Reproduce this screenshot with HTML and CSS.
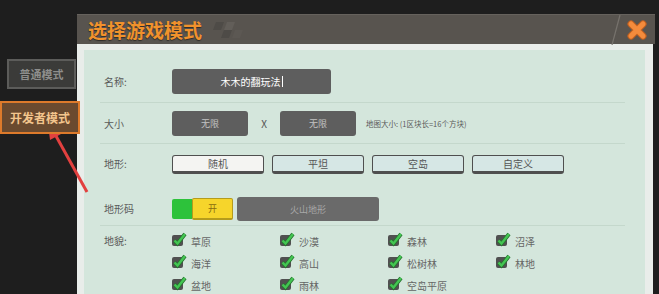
FILE: index.html
```html
<!DOCTYPE html>
<html>

<head>
    <meta charset="UTF-8">
    <title>选择游戏模式</title>
    <link rel="stylesheet" href="styles.css">
</head>

<body>
<div class="screen">
    <div class="modes">
        <div class="mode">普通模式</div>
        <div class="mode mode-dev">开发者模式</div>
    </div>

    <div class="dialog">
        <div class="dialog-head">
            <span class="dialog-title">选择游戏模式</span>
            <svg class="head-deco" width="34" height="24" viewBox="0 0 34 24">
                <polygon points="6,4 14,4 11,12 3,12" fill="#4e4b47"/>
                <polygon points="17,4 25,4 22,12 14,12" fill="#625e59"/>
                <polygon points="14,12 22,12 19,20 11,20" fill="#4e4b47"/>
                <polygon points="25,12 33,12 30,20 22,20" fill="#5c5853"/>
            </svg>
            <svg class="head-slash" width="12" height="30" viewBox="0 0 12 30">
                <line x1="2" y1="30" x2="10" y2="0" stroke="#77736d" stroke-width="1.2"/>
            </svg>
            <svg class="close" width="22" height="22" viewBox="0 0 22 22">
                <path d="M5 5 L17 17 M17 5 L5 17" stroke="#c4611f" stroke-width="7" stroke-linecap="round"/>
                <path d="M5 5 L17 17 M17 5 L5 17" stroke="#f38b3c" stroke-width="5" stroke-linecap="round"/>
            </svg>
        </div>

        <div class="dialog-body">
            <div class="sheet">
                <div class="row row-name">
                    <span class="label">名称:</span>
                    <div class="field field-name">木木的翻玩法<span class="caret"></span></div>
                </div>

                <div class="row row-size">
                    <span class="label">大小</span>
                    <div class="field field-size">无限</div>
                    <span class="times">X</span>
                    <div class="field field-size">无限</div>
                    <span class="hint">地图大小: (1区块长=16个方块)</span>
                </div>

                <div class="row-group">
                    <div class="row row-terrain">
                        <span class="label">地形:</span>
                        <div class="terrains">
                            <div class="terrain terrain-on">随机</div>
                            <div class="terrain">平坦</div>
                            <div class="terrain">空岛</div>
                            <div class="terrain">自定义</div>
                        </div>
                    </div>
                    <div class="row row-code">
                        <span class="label">地形码</span>
                        <div class="toggle">
                            <span class="toggle-on"></span>
                            <span class="toggle-knob">开</span>
                        </div>
                        <div class="field field-code">火山地形</div>
                    </div>
                </div>

                <div class="row row-biome">
                    <span class="label">地貌:</span>
                    <div class="biomes">
                        <div class="biome"><svg class="tick" width="16" height="15" viewBox="0 0 16 15"><rect x="0" y="3" width="11" height="11" rx="2" fill="#505050"/><path d="M2.5 8.5 L5.5 11.5 L13 2" fill="none" stroke="#27722f" stroke-width="4"/><path d="M2.5 8.5 L5.5 11.5 L13 2" fill="none" stroke="#43c552" stroke-width="2.4"/></svg>草原</div>
                        <div class="biome"><svg class="tick" width="16" height="15" viewBox="0 0 16 15"><rect x="0" y="3" width="11" height="11" rx="2" fill="#505050"/><path d="M2.5 8.5 L5.5 11.5 L13 2" fill="none" stroke="#27722f" stroke-width="4"/><path d="M2.5 8.5 L5.5 11.5 L13 2" fill="none" stroke="#43c552" stroke-width="2.4"/></svg>沙漠</div>
                        <div class="biome"><svg class="tick" width="16" height="15" viewBox="0 0 16 15"><rect x="0" y="3" width="11" height="11" rx="2" fill="#505050"/><path d="M2.5 8.5 L5.5 11.5 L13 2" fill="none" stroke="#27722f" stroke-width="4"/><path d="M2.5 8.5 L5.5 11.5 L13 2" fill="none" stroke="#43c552" stroke-width="2.4"/></svg>森林</div>
                        <div class="biome"><svg class="tick" width="16" height="15" viewBox="0 0 16 15"><rect x="0" y="3" width="11" height="11" rx="2" fill="#505050"/><path d="M2.5 8.5 L5.5 11.5 L13 2" fill="none" stroke="#27722f" stroke-width="4"/><path d="M2.5 8.5 L5.5 11.5 L13 2" fill="none" stroke="#43c552" stroke-width="2.4"/></svg>沼泽</div>
                        <div class="biome"><svg class="tick" width="16" height="15" viewBox="0 0 16 15"><rect x="0" y="3" width="11" height="11" rx="2" fill="#505050"/><path d="M2.5 8.5 L5.5 11.5 L13 2" fill="none" stroke="#27722f" stroke-width="4"/><path d="M2.5 8.5 L5.5 11.5 L13 2" fill="none" stroke="#43c552" stroke-width="2.4"/></svg>海洋</div>
                        <div class="biome"><svg class="tick" width="16" height="15" viewBox="0 0 16 15"><rect x="0" y="3" width="11" height="11" rx="2" fill="#505050"/><path d="M2.5 8.5 L5.5 11.5 L13 2" fill="none" stroke="#27722f" stroke-width="4"/><path d="M2.5 8.5 L5.5 11.5 L13 2" fill="none" stroke="#43c552" stroke-width="2.4"/></svg>高山</div>
                        <div class="biome"><svg class="tick" width="16" height="15" viewBox="0 0 16 15"><rect x="0" y="3" width="11" height="11" rx="2" fill="#505050"/><path d="M2.5 8.5 L5.5 11.5 L13 2" fill="none" stroke="#27722f" stroke-width="4"/><path d="M2.5 8.5 L5.5 11.5 L13 2" fill="none" stroke="#43c552" stroke-width="2.4"/></svg>松树林</div>
                        <div class="biome"><svg class="tick" width="16" height="15" viewBox="0 0 16 15"><rect x="0" y="3" width="11" height="11" rx="2" fill="#505050"/><path d="M2.5 8.5 L5.5 11.5 L13 2" fill="none" stroke="#27722f" stroke-width="4"/><path d="M2.5 8.5 L5.5 11.5 L13 2" fill="none" stroke="#43c552" stroke-width="2.4"/></svg>林地</div>
                        <div class="biome"><svg class="tick" width="16" height="15" viewBox="0 0 16 15"><rect x="0" y="3" width="11" height="11" rx="2" fill="#505050"/><path d="M2.5 8.5 L5.5 11.5 L13 2" fill="none" stroke="#27722f" stroke-width="4"/><path d="M2.5 8.5 L5.5 11.5 L13 2" fill="none" stroke="#43c552" stroke-width="2.4"/></svg>盆地</div>
                        <div class="biome"><svg class="tick" width="16" height="15" viewBox="0 0 16 15"><rect x="0" y="3" width="11" height="11" rx="2" fill="#505050"/><path d="M2.5 8.5 L5.5 11.5 L13 2" fill="none" stroke="#27722f" stroke-width="4"/><path d="M2.5 8.5 L5.5 11.5 L13 2" fill="none" stroke="#43c552" stroke-width="2.4"/></svg>雨林</div>
                        <div class="biome"><svg class="tick" width="16" height="15" viewBox="0 0 16 15"><rect x="0" y="3" width="11" height="11" rx="2" fill="#505050"/><path d="M2.5 8.5 L5.5 11.5 L13 2" fill="none" stroke="#27722f" stroke-width="4"/><path d="M2.5 8.5 L5.5 11.5 L13 2" fill="none" stroke="#43c552" stroke-width="2.4"/></svg>空岛平原</div>
                    </div>
                </div>
            </div>
        </div>
    </div>

    <!-- red pointer drawn over the mode buttons -->
    <svg class="arrow" width="659" height="294" viewBox="0 0 659 294">
        <line x1="56" y1="136" x2="87" y2="192" stroke="#e2403f" stroke-width="3"/>
        <polygon points="48,124 61,134 50,140" fill="#e2403f"/>
    </svg>
</div>
</body>

</html>
```

FILE: styles.css
```css
* {
    padding: 0;
    margin: 0;
    box-sizing: border-box;
}

body {
    background: #1e1e1e;
    font-family: "Noto Sans CJK SC", "Noto Sans", sans-serif;
    overflow: hidden;
}

.screen {
    position: relative;
    display: flex;
    width: 659px;
    height: 294px;
    padding-top: 14px;
    overflow: hidden;
}

/* left mode buttons */
.modes {
    width: 77px;
    flex-shrink: 0;
    padding-top: 45px;
}

.mode {
    display: flex;
    align-items: center;
    justify-content: center;
    width: 69px;
    height: 30px;
    margin-left: 7px;
    background: #3b3b39;
    border: 2px solid #5c5c5a;
    color: #8e8e8c;
    font-size: 11px;
    font-weight: bold;
}

.mode-dev {
    position: relative;
    z-index: 1;
    width: 80px;
    height: 33px;
    margin-left: 0;
    margin-top: 12px;
    background: #6a4a2f;
    border: 2px solid #dd7a2b;
    color: #f3c58d;
    font-size: 12px;
}

/* dialog */
.dialog {
    width: 578px;
    flex-shrink: 0;
}

.dialog-head {
    display: flex;
    align-items: center;
    height: 30px;
    padding-left: 11px;
    padding-right: 7px;
    background: #58544f;
    border-top: 1px solid #66625d;
}

.dialog-title {
    color: #f1922c;
    font-size: 19px;
    font-weight: bold;
    line-height: 1;
    text-shadow: 0 1px 1px #2e2b28;
}

.head-deco {
    margin-left: 8px;
}

.head-slash {
    margin-left: auto;
    margin-right: 4px;
}

.dialog-body {
    height: 250px;
    margin-right: 2px;
    padding: 6px 8px 0 7px;
    background: #e9edea;
}

.sheet {
    height: 100%;
    padding: 0 20px 0 16px;
    background: #d4e6dc;
}

.row {
    display: flex;
    align-items: center;
    padding-left: 4px;
}

.row-name,
.row-size,
.row-group {
    border-bottom: 1px solid #c4d8cc;
}

.row-name {
    padding-top: 19px;
    padding-bottom: 8px;
}

.row-size {
    padding-top: 8px;
    padding-bottom: 7px;
}

.row-group {
    padding-top: 9px;
    padding-bottom: 4px;
}

.row-code {
    margin-top: 22px;
}

.row-biome {
    align-items: flex-start;
    padding-top: 4px;
}

.label {
    width: 68px;
    flex-shrink: 0;
    color: #5a5a5a;
    font-size: 10px;
    line-height: 22px;
}

.field {
    display: flex;
    align-items: center;
    justify-content: center;
    height: 25px;
    background: #5e5e5e;
    border-radius: 3px;
    color: #c2c2c2;
    font-size: 9px;
}

.field-name {
    width: 159px;
    color: #ffffff;
    font-size: 10px;
}

.caret {
    display: inline-block;
    width: 1px;
    height: 11px;
    margin-left: 1px;
    background: #ffffff;
}

.field-size {
    width: 76px;
}

.times {
    width: 32px;
    text-align: center;
    color: #555555;
    font-size: 10px;
}

.hint {
    margin-left: 10px;
    color: #5a5a5a;
    font-size: 7.5px;
}

.terrains {
    display: flex;
    gap: 8px;
}

.terrain {
    display: flex;
    align-items: center;
    justify-content: center;
    width: 92px;
    height: 19px;
    background: #d6e7e5;
    border: 1px solid #4f4f4f;
    border-bottom-width: 3px;
    border-radius: 3px;
    color: #555555;
    font-size: 10px;
}

.terrain-on {
    background: #f4f4f2;
}

.toggle {
    display: flex;
    align-items: stretch;
    width: 61px;
    height: 22px;
    margin-right: 4px;
}

.toggle-on {
    width: 20px;
    margin: 1px 0 1px 0;
    background: #2dc23b;
    border-radius: 2px 0 0 2px;
}

.toggle-knob {
    display: flex;
    align-items: center;
    justify-content: center;
    width: 41px;
    background: #f6d52b;
    border: 1px solid #b59c1c;
    border-bottom-width: 2px;
    border-radius: 2px;
    color: #8a6c10;
    font-size: 9px;
}

.field-code {
    width: 142px;
    height: 24px;
    background: #6a6a6a;
    color: #a8a8a8;
}

.biomes {
    display: grid;
    grid-template-columns: repeat(4, 108px);
    grid-auto-rows: 22px;
}

.biome {
    display: flex;
    align-items: center;
    color: #656565;
    font-size: 10px;
}

.tick {
    margin-right: 3px;
    margin-top: -3px;
}

.arrow {
    position: absolute;
    left: 0;
    top: 0;
    pointer-events: none;
}
```
